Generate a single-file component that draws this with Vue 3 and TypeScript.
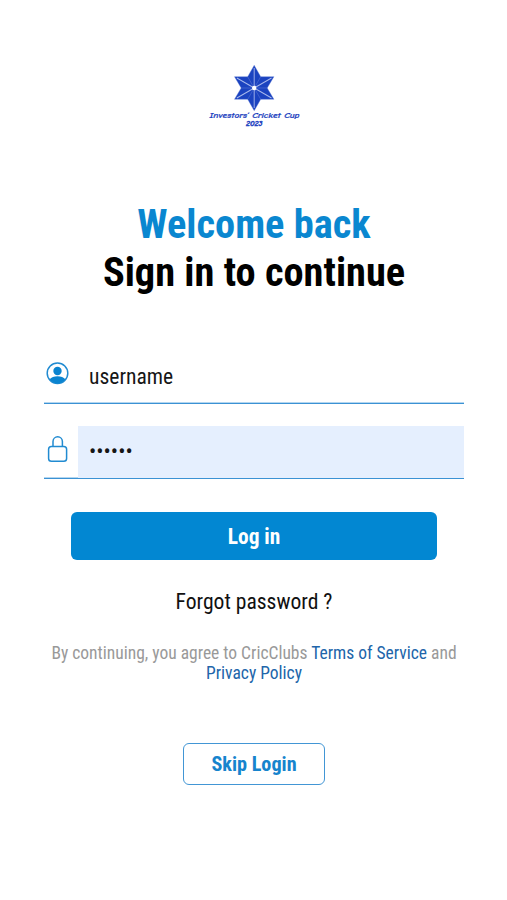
<script setup lang="ts">
import { ref } from 'vue'

const username = ref('username')
const password = ref('secret')
const rays = [0, 60, 120, 180, 240, 300]
</script>

<template>
  <main class="page">
    <svg class="logo" viewBox="0 0 110 80" role="img" aria-label="Investors' Cricket Cup 2023">
      <g transform="translate(55.2 33)">
        <polygon
          class="star"
          points="0,-22.7 6.5,-11.3 19.7,-11.3 13,0 19.7,11.3 6.5,11.3 0,22.7 -6.5,11.3 -19.7,11.3 -13,0 -19.7,-11.3 -6.5,-11.3"
        />
        <g v-for="angle in rays" :key="angle" :transform="`rotate(${angle})`">
          <path class="ray" d="M0 0V-20" />
          <path class="seam" d="M0 0L6.5 -11.3" />
        </g>
        <circle class="core" r="2.2" />
      </g>
      <text class="logo-name" x="10.5" y="63.3" textLength="90" lengthAdjust="spacingAndGlyphs">Investors’ Cricket Cup</text>
      <text class="logo-year" x="47" y="71.3" textLength="16.5" lengthAdjust="spacingAndGlyphs">2023</text>
    </svg>

    <h1 class="title"><span class="accent">Welcome back</span><br />Sign in to continue</h1>

    <form class="form" @submit.prevent>
      <label class="field">
        <svg class="icon" viewBox="0 0 28 28">
          <circle class="line" cx="13.5" cy="13.3" r="10.3" />
          <circle class="solid" cx="13.5" cy="11" r="4.2" />
          <path class="solid" d="M5.600 19.300C7.400 17 10 16.200 13.500 16.200s6.100.8 7.900 3.100C19.500 22 16.800 23.500 13.500 23.500S7.500 22 5.600 19.300Z" />
        </svg>
        <input v-model="username" class="input" type="text" />
      </label>
      <label class="field">
        <svg class="icon" viewBox="0 0 28 28">
          <rect class="line" x="4.6" y="11.4" width="18" height="14.8" rx="2.800" />
          <path class="line" d="M9 11.200V6.500a4.700 4.700 0 0 1 9.400 0V11.200" />
        </svg>
        <input v-model="password" class="input filled" type="password" />
      </label>
      <button class="login" type="submit">Log in</button>
    </form>

    <a class="forgot">Forgot password ?</a>
    <p class="terms">By continuing, you agree to CricClubs <a>Terms of Service</a> and <a>Privacy Policy</a></p>
    <button class="skip" type="button">Skip Login</button>
  </main>
</template>

<style>
body {
  background: #fff;
}
</style>

<style scoped>
.page {
  box-sizing: border-box;
  width: 507px;
  height: 900px;
  padding: 55px 43px 0 44px;
  display: flex;
  flex-direction: column;
  align-items: center;
  font-family: "Roboto Condensed", Roboto, sans-serif;
  font-stretch: 75%;
  color: #111;
}
.logo {
  width: 110px;
  height: 80px;
  flex: none;
}
.star {
  fill: #1b43c0;
  stroke: #5d78d4;
  stroke-width: 0.4;
}
.ray {
  stroke: #a9b9ec;
  stroke-width: 0.9;
}
.seam {
  stroke: #5c78d4;
  stroke-width: 0.5;
}
.core {
  fill: #fff;
}
.logo-name,
.logo-year {
  fill: #1d3fc0;
  font-family: "Comic Neue", cursive;
  font-style: italic;
  font-weight: 600;
  font-stretch: 100%;
  stroke: #1d3fc0;
  stroke-width: 0.2;
}
.logo-name {
  font-size: 8px;
}
.logo-year {
  font-size: 7px;
  stroke-width: 0.4;
}
.title {
  margin: 66px 0 0;
  font-size: 40.4px;
  line-height: 48px;
  font-weight: 700;
  text-align: center;
  color: #000;
}
.accent {
  color: #0a87d0;
}
.form {
  width: 100%;
  margin-top: 53px;
  display: flex;
  flex-direction: column;
  align-items: center;
}
.field {
  box-sizing: border-box;
  width: 100%;
  height: 54px;
  display: flex;
  align-items: center;
  border-bottom: 1px solid #3b92d4;
  box-shadow: 0 -1px 0 #b4d6ef inset;
}
.field + .field {
  margin-top: 21px;
}
.icon {
  width: 28px;
  height: 28px;
  margin-right: 6px;
  margin-bottom: 5px;
  flex: none;
}
.line {
  fill: none;
  stroke: #218bd1;
  stroke-width: 1.5;
}
.solid {
  fill: #0a84d0;
}
.input {
  box-sizing: border-box;
  flex: 1;
  min-width: 0;
  height: 52px;
  padding: 0 11px 1px;
  border: 0;
  outline: 0;
  background: transparent;
  font: inherit;
  font-size: 21.6px;
  color: #161616;
}
.filled {
  background: #e5effe;
}
.login {
  width: 366px;
  height: 48px;
  margin-top: 33px;
  padding: 0;
  border: 0;
  border-radius: 6px;
  background: #0287d2;
  color: #fff;
  font: inherit;
  font-size: 21.4px;
  font-weight: 700;
}
.forgot {
  margin-top: 28px;
  font-size: 21.6px;
  line-height: 28px;
}
.terms {
  width: 415px;
  margin: 27px 0 0;
  font-size: 17.5px;
  line-height: 20px;
  text-align: center;
  color: #999;
}
.terms a {
  color: #2165aa;
}
.skip {
  width: 142px;
  height: 42px;
  margin-top: 60px;
  padding: 0;
  border: 1.5px solid #4296d5;
  border-radius: 6px;
  background: #fff;
  color: #1684cd;
  font: inherit;
  font-size: 20.2px;
  font-weight: 700;
}
</style>
